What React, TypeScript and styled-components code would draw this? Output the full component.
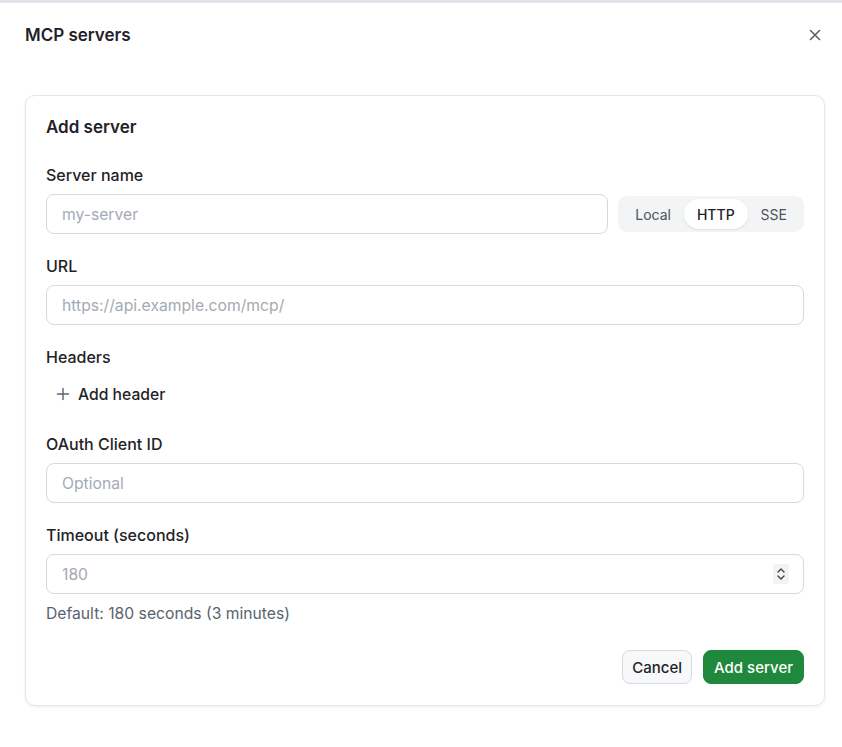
import styled, { createGlobalStyle } from "styled-components";

const GlobalStyle = createGlobalStyle`
  * {
    box-sizing: border-box;
  }
  body {
    margin: 0;
    background: #ffffff;
    font-family: Inter, "Liberation Sans", sans-serif;
    color: #1f2328;
  }
`;

const Dialog = styled.div`
  width: 842px;
  height: 747px;
  border-top: 3px solid #dfe3ea;
  background: #ffffff;
`;

const Header = styled.div`
  display: flex;
  align-items: center;
  justify-content: space-between;
  height: 64px;
  padding: 0 15px 0 25px;
`;

const Title = styled.h1`
  margin: 0;
  font-size: 17px;
  font-weight: 600;
  color: #1f2328;
`;

const CloseButton = styled.button`
  display: flex;
  align-items: center;
  justify-content: center;
  width: 24px;
  height: 24px;
  padding: 0;
  border: none;
  background: transparent;
  color: #59636e;
  cursor: pointer;
`;

const Card = styled.div`
  margin: 28px 0 0 25px;
  width: 800px;
  border: 1px solid #e3e6ea;
  border-radius: 10px;
  box-shadow: 0 1px 3px rgba(31, 35, 40, 0.08);
  padding: 19px 20px 21px;
`;

const CardTitle = styled.h2`
  margin: 0 0 25px;
  font-size: 17px;
  line-height: 24px;
  font-weight: 600;
`;

const Field = styled.div<{ $gap?: number }>`
  display: flex;
  flex-direction: column;
  margin-bottom: ${(p) => p.$gap ?? 21}px;
`;

const Label = styled.label`
  font-size: 16px;
  line-height: 22px;
  font-weight: 500;
  margin-bottom: 8px;
  color: #1f2328;
`;

const InputRow = styled.div`
  display: flex;
  align-items: center;
  gap: 10px;
`;

const InputBox = styled.div`
  position: relative;
  flex: 1;
  display: flex;
  align-items: center;
`;

const Input = styled.input`
  width: 100%;
  height: 40px;
  border: 1px solid #d6dae0;
  border-radius: 8px;
  padding: 0 15px;
  font-family: inherit;
  font-size: 15.7px;
  color: #1f2328;
  outline: none;
  &::placeholder {
    color: #a4aab3;
  }
`;

const Spinner = styled.span`
  position: absolute;
  right: 15px;
  display: flex;
  align-items: center;
  justify-content: center;
  width: 16px;
  height: 20px;
  border-radius: 3px;
  background: #f1f3f5;
  color: #3d444d;
`;

const Segmented = styled.div`
  display: flex;
  align-items: center;
  height: 36px;
  padding: 0 4px;
  border-radius: 9px;
  background: #f3f4f6;
`;

const Segment = styled.button<{ $active?: boolean }>`
  height: 30px;
  padding: 0 13px;
  border: none;
  border-radius: 999px;
  font-family: inherit;
  font-size: 14px;
  font-weight: ${(p) => (p.$active ? 500 : 400)};
  color: ${(p) => (p.$active ? "#1f2328" : "#4b525b")};
  background: ${(p) => (p.$active ? "#ffffff" : "transparent")};
  box-shadow: ${(p) => (p.$active ? "0 1px 2px rgba(31,35,40,0.1)" : "none")};
  cursor: pointer;
`;

const AddHeaderButton = styled.button`
  display: flex;
  align-items: center;
  gap: 8px;
  align-self: flex-start;
  height: 32px;
  margin-top: 2px;
  padding: 0 10px;
  border: none;
  background: transparent;
  font-family: inherit;
  font-size: 15.7px;
  font-weight: 500;
  color: #1f2328;
  cursor: pointer;
  svg {
    color: #59636e;
  }
`;

const Hint = styled.p`
  margin: 10px 0 0;
  font-size: 15.7px;
  line-height: 20px;
  color: #59636e;
`;

const Actions = styled.div`
  display: flex;
  justify-content: flex-end;
  gap: 11px;
  margin-top: 26px;
`;

const Button = styled.button<{ $primary?: boolean }>`
  height: 34px;
  padding: 0 ${(p) => (p.$primary ? 10 : 9)}px;
  border-radius: 8px;
  border: 1px solid ${(p) => (p.$primary ? "#1f883d" : "#d6dae0")};
  background: ${(p) => (p.$primary ? "#1f883d" : "#f6f8fa")};
  color: ${(p) => (p.$primary ? "#ffffff" : "#1f2328")};
  font-family: inherit;
  font-size: 15px;
  font-weight: 500;
  cursor: pointer;
`;

const CloseIcon = () => (
  <svg width="16" height="16" viewBox="0 0 16 16" fill="none" stroke="currentColor" strokeWidth="1.6" strokeLinecap="round">
    <path d="M3.5 3.5l9 9M12.5 3.5l-9 9" />
  </svg>
);

const PlusIcon = () => (
  <svg width="14" height="14" viewBox="0 0 14 14" fill="none" stroke="currentColor" strokeWidth="1.4" strokeLinecap="round">
    <path d="M7 1.5v11M1.5 7h11" />
  </svg>
);

const UpDownIcon = () => (
  <svg width="10" height="16" viewBox="0 0 10 16" fill="none" stroke="currentColor" strokeWidth="1.4" strokeLinecap="round" strokeLinejoin="round">
    <path d="M2 6l3-3 3 3M2 10l3 3 3-3" />
  </svg>
);

const transports = ["Local", "HTTP", "SSE"];

export default function App() {
  return (
    <>
      <GlobalStyle />
      <Dialog>
        <Header>
          <Title>MCP servers</Title>
          <CloseButton aria-label="Close">
            <CloseIcon />
          </CloseButton>
        </Header>
        <Card>
          <CardTitle>Add server</CardTitle>
          <Field>
            <Label>Server name</Label>
            <InputRow>
              <InputBox>
                <Input placeholder="my-server" />
              </InputBox>
              <Segmented>
                {transports.map((t) => (
                  <Segment key={t} $active={t === "HTTP"}>
                    {t}
                  </Segment>
                ))}
              </Segmented>
            </InputRow>
          </Field>
          <Field>
            <Label>URL</Label>
            <Input placeholder="https://api.example.com/mcp/" />
          </Field>
          <Field $gap={23}>
            <Label>Headers</Label>
            <AddHeaderButton>
              <PlusIcon />
              Add header
            </AddHeaderButton>
          </Field>
          <Field>
            <Label>OAuth Client ID</Label>
            <Input placeholder="Optional" />
          </Field>
          <Field $gap={0}>
            <Label>Timeout (seconds)</Label>
            <InputBox>
              <Input placeholder="180" />
              <Spinner>
                <UpDownIcon />
              </Spinner>
            </InputBox>
            <Hint>Default: 180 seconds (3 minutes)</Hint>
          </Field>
          <Actions>
            <Button>Cancel</Button>
            <Button $primary>Add server</Button>
          </Actions>
        </Card>
      </Dialog>
    </>
  );
}
